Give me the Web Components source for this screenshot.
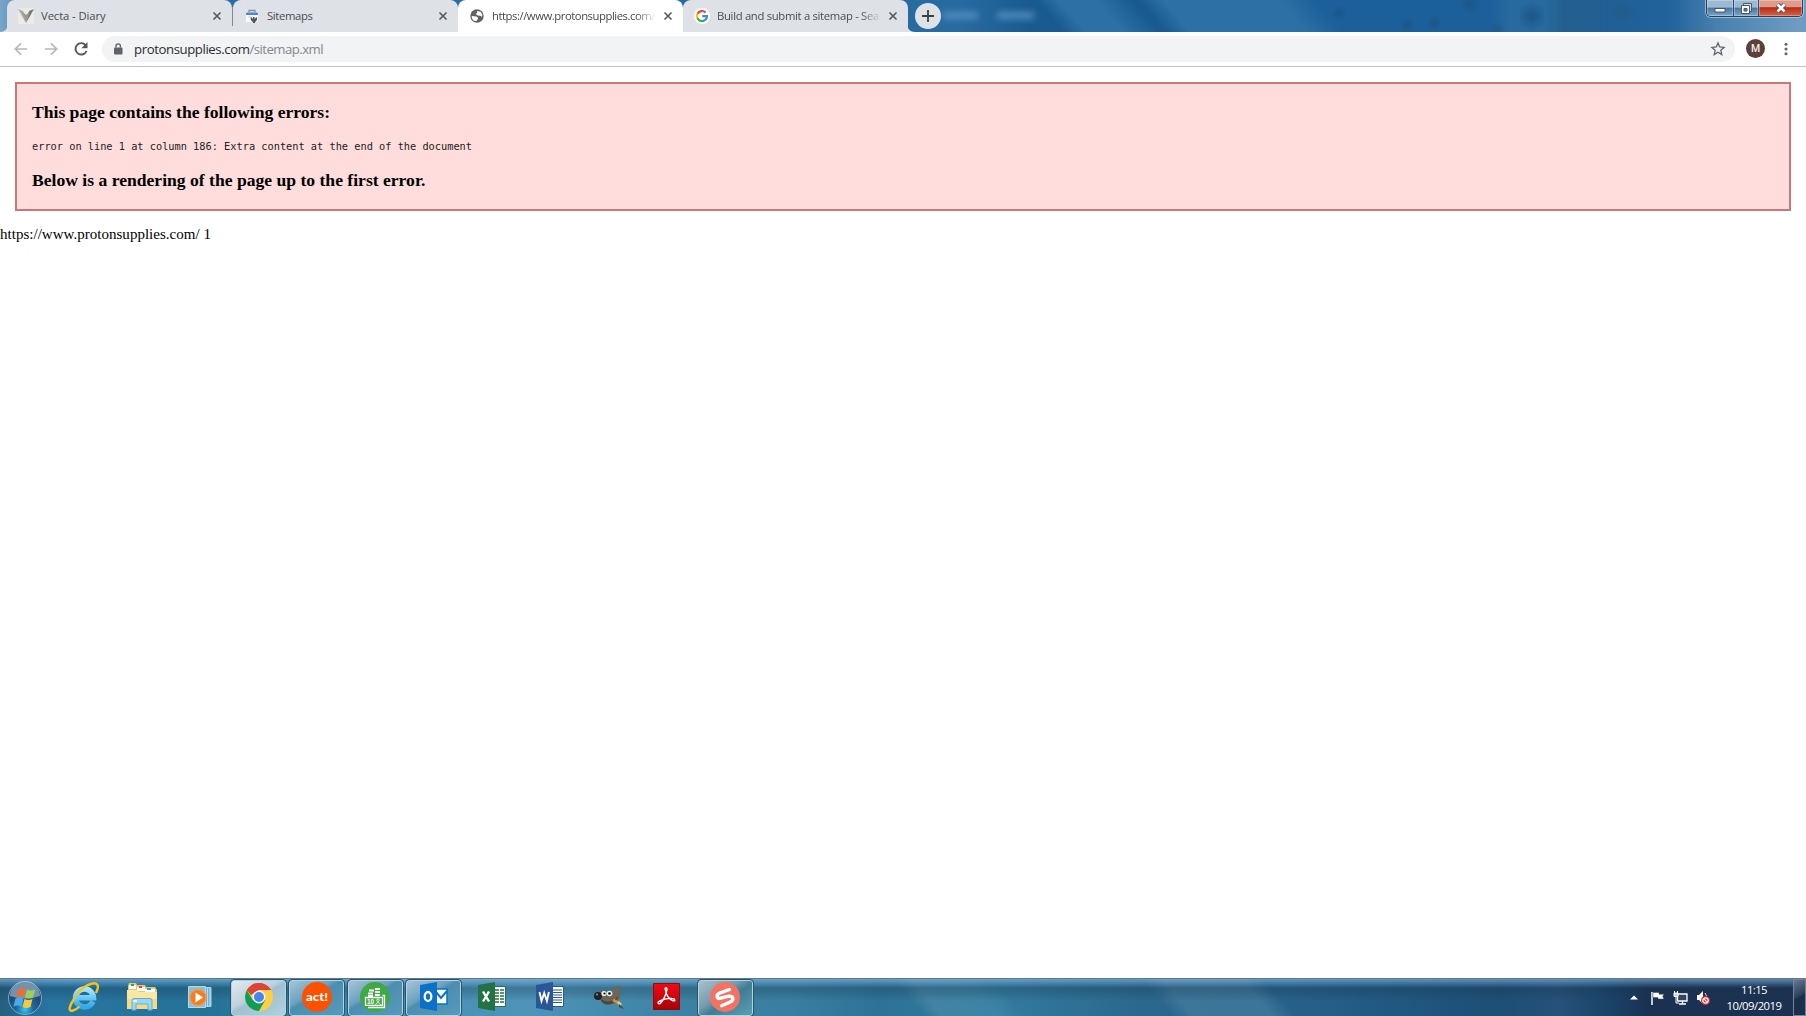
<!DOCTYPE html>
<html lang="en">
<head>
<meta charset="utf-8">
<title>protonsupplies.com/sitemap.xml</title>
<style>
    html, body {
        height: 100%;
        margin: 0;
        overflow: hidden;
        background: #fff;
    }
</style>
</head>
<body>
<desk-top></desk-top>
<script>
const define = (name, html, setup) => {
    const template = document.createElement('template');
    template.innerHTML = html;

    window.customElements.define(name, class extends HTMLElement {
        connectedCallback() {
            if (this.shadowRoot) return;
            this.attachShadow({ mode: 'open' });
            this.shadowRoot.appendChild(template.content.cloneNode(true));
            if (setup) setup(this, this.shadowRoot);
        }
    });
};

// text spaced out (or in) so that it fills the given width
define('fit-text', `
    <style>
        :host { display: block; }
        span { display: inline-block; white-space: pre; }
    </style>
    <span><slot></slot></span>
`, (host, root) => {
    const span = root.querySelector('span');
    const width = Number(host.getAttribute('width'));
    const extra = width - span.getBoundingClientRect().width;
    span.style.letterSpacing = (extra / host.textContent.length) + 'px';
});

const icons = {
    vecta: `<svg width="16" height="16" viewBox="0 0 16 16"><path fill="#ecebe6" d="M0 0h16v16H0z"/><path fill="#aaa" d="M0 1l5 2 3 12z"/><path fill="#777" d="M16 1l-5 2-3 12z"/><path fill="#999" d="M4 3l4 4 4-4-4 12z"/></svg>`,
    sitemaps: `<svg width="16" height="16" viewBox="0 0 16 16"><path fill="#f7f8f9" d="M2 5h12v9H2z"/><path d="M5 4V2.500h6V4" fill="none" stroke="#8c9196" stroke-width="1.300"/><path fill="#a8acb0" d="M3 4h10v1H3z"/><path fill="#4285f4" d="M2 5h12v2H2z"/><path fill="#d0d3d6" d="M4 8.500h5v1H4z"/><path fill="#53575b" d="M7 9l2 2V9h1.500v2l2-2c1.500 2 0 4-1.500 5v1H9v-1C7 13 6 11 7 9z"/></svg>`,
    globe: `<svg width="16" height="16" viewBox="0 0 16 16"><circle cx="8" cy="8" r="6.700" fill="#5f6368"/><path fill="#fff" d="M3 8l4 .5c1.500.3 2 1 2 2.200L7.500 13C5 13.500 2.700 11 2.700 8.500zM8 3l3.500.7 1.800 2.800-.3 2.500-1.500-1.200-2.700-.3-2-1.500 1.500-1.500z"/></svg>`,
    google: `<svg width="16" height="16" viewBox="0 0 16 16"><circle cx="8" cy="8" r="8" fill="#fff"/><g fill="none" stroke-width="2.200"><path stroke="#ea4335" d="M3.500 5.700A5 5 0 0 1 11.600 4.600"/><path stroke="#fbbc05" d="M3.500 5.700a5 5 0 0 0 0 4.600"/><path stroke="#34a853" d="M3.500 10.300a5 5 0 0 0 7.900 1.400"/><path stroke="#4285f4" d="M11.300 11.800A5 5 0 0 0 13 8.200H8.200"/></g></svg>`,

    ie: `<svg width="32" height="32" viewBox="0 0 32 32"><defs><linearGradient id="b" x2="0" y2="1"><stop offset="0" stop-color="#a4e5ff"/><stop offset="1" stop-color="#2faae8"/></linearGradient></defs><path fill="none" stroke="url(#b)" stroke-width="5.500" d="M25 20.500c-2 4-5 5.500-8.500 5.500a9 9 0 1 1 9-9.300H10"/><path fill="none" stroke="#f6c416" stroke-width="2.400" d="M7.500 16C1 25-.500 31 5 29.500c2-.5 4.500-2 6.500-4M8 14C15 5 26.500-.500 29.500 4c1 2 0 5-1.500 8"/></svg>`,
    explorer: `<svg width="32" height="30" viewBox="0 0 32 30"><path fill="#e9c868" d="M2 4l1-3h7l1 2h8l1 2h9l2 3v19H2z"/><path fill="#fff" d="M3 3h7v4H3zM11 5h8v4h-8zM19 7h10v4H19z"/><path fill="#29ad50" d="M5 2h3v2H5z"/><path fill="#e24a31" d="M13 4h3v2h-3z"/><path fill="#3d8fd8" d="M21 6h4v2h-4z"/><path fill="#fae7a3" d="M1 8h10l2 2h18v17H1z"/><path fill="#f6d985" d="M1 17h30v10H1z"/><path fill="#9bd7f1" stroke="#62afd5" d="M6 18.500q0-2 2-2h16q2 0 2 2V28h-4v-6H10v6H6z"/><path fill="#e0f6ff" d="M7 18h4v2H7z"/></svg>`,
    media: `<svg width="28" height="26" viewBox="0 0 28 26"><path fill="#67a8ca" stroke="#a8d4e6" d="M6 3.500h19v19H6z"/><path stroke="#b9dcec" stroke-width="1.300" d="M21.500 3v20M24 4v18"/><path fill="#8fbfd7" stroke="#b4d9e7" d="M2.500 2.500h17v21h-17z"/><circle cx="12" cy="13.500" r="8.500" fill="#f57c1f"/><circle cx="12" cy="13.500" r="8" fill="none" stroke="#fda35a"/><path fill="#fff" d="M9.500 8.500v10l7.500-5z"/></svg>`,
    chrome: `<svg width="30" height="30" viewBox="0 0 30 30"><circle cx="15" cy="15" r="14" fill="#ffcd41"/><path fill="#db4437" d="M2.900 8A14 14 0 0 1 27.100 8H15z"/><path fill="#0f9d58" d="M2.900 8A14 14 0 0 0 15 29l6-10.500-6-2-6 2z"/><path fill="#db4437" d="M15 8h12.100A14 14 0 0 0 2.900 8l4 5z"/><circle cx="15" cy="15" r="6.500" fill="#f1f1f1"/><circle cx="15" cy="15" r="5" fill="#4285f4"/></svg>`,
    act: `<svg width="30" height="30" viewBox="0 0 30 30"><circle cx="15" cy="15" r="15" fill="#fc5200"/><text x="15" y="19" text-anchor="middle" textLength="22" lengthAdjust="spacingAndGlyphs" fill="#fff" font-family="Lato, sans-serif" font-weight="900" font-size="12">act!</text></svg>`,
    money: `<svg width="30" height="30" viewBox="0 0 30 30"><circle cx="15" cy="15" r="15" fill="#3dab42"/><path stroke="#fff" stroke-width="2" d="M9 8.500h5M8 11.500h5M8 14h5M15 7h5M15 10h5M15 13h5"/><path fill="none" stroke="#fff" stroke-width="1.300" d="M5.500 15.500h17v7.800h-17zM22.500 13.500h2v12H8"/><text x="7" y="22" fill="#fff" font-family="Liberation Sans, sans-serif" font-size="6.500" font-weight="700">10</text><circle cx="18" cy="18.200" r="1.300" fill="none" stroke="#fff" stroke-width=".8"/><path fill="none" stroke="#fff" stroke-width=".8" d="M15.500 22.500q2.500-4 5 0"/></svg>`,
    outlook: `<svg width="28" height="29" viewBox="0 0 28 29"><path fill="#fff" stroke="#0873c9" stroke-width="1.500" d="M15 7h12v15H15z"/><path fill="none" stroke="#0873c9" stroke-width="2" d="M16 10l5 6 6-7"/><path fill="#0b70c8" d="M0 3L17 0v29L0 26z"/><ellipse cx="8" cy="14.500" rx="3.300" ry="4.500" fill="none" stroke="#fff" stroke-width="2.300"/></svg>`,
    excel: `<svg width="28" height="29" viewBox="0 0 28 29"><path fill="#fff" stroke="#217346" stroke-width="1" d="M15 4.500h12.500v20H15z"/><path stroke="#217346" stroke-width="1.600" stroke-dasharray="4 1" d="M17 8h9M17 11h9M17 14h9M17 17h9M17 20h9"/><path fill="#217346" d="M0 3L17 0v29L0 26z"/><path stroke="#fff" stroke-width="2.400" d="M5 9.500l6 10M11 9.500l-6 10"/></svg>`,
    word: `<svg width="28" height="29" viewBox="0 0 28 29"><path fill="#fff" stroke="#2b5797" stroke-width="1" d="M15 4.500h12.500v20H15z"/><path stroke="#2b5797" stroke-width="1.200" d="M17 8h9M17 10.500h9M17 13h9M17 15.500h9M17 18h9M17 20.500h9"/><path fill="#2a5699" d="M0 3L17 0v29L0 26z"/><path fill="none" stroke="#fff" stroke-width="1.900" d="M3.500 10l2 9 2.700-8 2.700 8 2-9"/></svg>`,
    gimp: `<svg width="32" height="26" viewBox="0 0 32 26"><path fill="#6d6556" d="M9 6c3 2 5 1 7 1 4-1 7-4 10-6 2 7 2 12-1 16-4 5-12 4-17-1-4 0-7-2-6-5 1-3 4-3 7-5z"/><path fill="#4a463d" d="M8 15c5 4 13 3 17-3-1 8-12 12-17 5z"/><circle cx="5" cy="12" r="4" fill="#202226"/><circle cx="4" cy="10.500" r="1" fill="#99a"/><circle cx="11" cy="9.500" r="2.600" fill="#eee"/><circle cx="16.500" cy="9.500" r="2.800" fill="#eee"/><circle cx="11.500" cy="9.500" r="1.100"/><circle cx="16.500" cy="9.500" r="1.300"/><path stroke="#e28b2d" stroke-width="3" d="M20 16l6 3"/><path stroke="#d7c8a5" stroke-width="2.500" d="M25 18l3 3"/><path fill="#5c3818" d="M26 20l5 5-5-2z"/></svg>`,
    acrobat: `<svg width="27" height="27" viewBox="0 0 27 27"><defs><linearGradient id="r" x2="0" y2="1"><stop offset="0" stop-color="#f30b12"/><stop offset="1" stop-color="#a90008"/></linearGradient></defs><path fill="url(#r)" stroke="#8c0b0d" d="M.5.5h26v26H.5z"/><path fill="none" stroke="#fff" stroke-width="1.400" d="M12.500 7c-1.500-3 2.500-3 1.200.5-1 5-3 9-6 12.500-2.500 2-4-.7-1-2 4-2 8-3 12-2.500 4 .2 4 3 1.300 2.300-4-1.300-7-6-7.500-10.800z"/></svg>`,
    snag: `<svg width="30" height="30" viewBox="0 0 30 30"><circle cx="15" cy="15" r="15" fill="#f37362"/><path fill="none" stroke="#fff" stroke-width="3.400" stroke-linecap="round" stroke-linejoin="round" d="M19.500 7.500l-10 3.700c-4 1.800-2.500 6 1.200 5l8-2c4.500-.7 5.500 3.800 2 5.500l-9 4"/></svg>`
};

define('browser-tab', `
    <style>
        :host {
            box-sizing: border-box;
            display: flex;
            align-items: center;
            width: 225px;
            height: 32px;
            padding: 0 9px 0 11px;
            border-radius: 8px 8px 0 0;
            background: #dee1e6;
            color: #4a4d51;
            font: 11.300px "Open Sans", "Noto Sans", sans-serif;
        }
        :host([active]) { background: #fff; color: #45484c; }
        .icon { width: 16px; height: 16px; margin-right: 7px; }
        .title { flex: 1; overflow: hidden; padding-bottom: 2px; }
        .title.long { -webkit-mask-image: linear-gradient(90deg, #000 calc(100% - 18px), transparent calc(100% + 2px)); }
        .close { margin-left: 8px; }
    </style>
    <div class="icon"></div>
    <div class="title"><slot></slot></div>
    <svg class="close" width="12" height="12" viewBox="0 0 12 12"><path d="M2.500 2.500l7 7M9.500 2.500l-7 7" stroke="#54575b" stroke-width="1.600"/></svg>
`, (host, root) => {
    root.querySelector('.icon').innerHTML = icons[host.getAttribute('icon')];
    if (host.hasAttribute('long')) root.querySelector('.title').classList.add('long');
});

define('window-controls', `
    <style>
        :host {
            display: flex;
            height: 16px;
            border: 1px solid #273f59;
            border-top: 0;
            border-radius: 0 0 5px 5px;
            box-shadow: 0 0 0 1px rgba(220, 235, 250, .55);
            overflow: hidden;
        }
        div {
            display: flex;
            align-items: center;
            justify-content: center;
            width: 26px;
            border-right: 1px solid #294a6c;
            background: linear-gradient(#9bb9d3 0 45%, #47779f 50%, #7aa5c8);
            box-shadow: inset 0 0 0 1px rgba(255, 255, 255, .3);
        }
        .restore { width: 24px; }
        .close { width: 43px; border: 0; background: linear-gradient(#dd9b8c 0 42%, #b92d16 48%, #d46445); }
    </style>
    <div><svg width="12" height="12" viewBox="0 0 12 12"><path fill="#fff" stroke="#4a5764" d="M1 6.500h10v3.500H1z"/></svg></div>
    <div class="restore"><svg width="13" height="13" viewBox="0 0 13 13"><path fill="#ddd" stroke="#4a5764" d="M3.500 1.500h8v8h-8z"/><path fill="#fff" stroke="#4a5764" d="M1.500 3.500h8v8h-8z"/><path fill="#61809d" stroke="#4a5764" d="M4 6.500h3v2.500H4z"/></svg></div>
    <div class="close"><svg width="12" height="12" viewBox="0 0 12 12"><path d="M2.500 2.500l7 7M9.500 2.500l-7 7" stroke="#5b4a4a" stroke-width="4.500"/><path d="M2.500 2.500l7 7M9.500 2.500l-7 7" stroke="#fff" stroke-width="2.600"/></svg></div>
`);

define('tab-strip', `
    <style>
        :host {
            display: flex;
            height: 32px;
            position: relative;
            background:
                radial-gradient(circle at 1339px 13px, #1b527d99 1px, transparent 9px),
                radial-gradient(circle at 1407px 25px, #1b527d99 1px, transparent 9px),
                radial-gradient(circle at 1434px 23px, #1b527d99 1px, transparent 9px),
                radial-gradient(circle at 1470px 4px, #1b527d99 1px, transparent 11px),
                radial-gradient(circle at 1532px 16px, #1a507db0 2px, transparent 14px),
                radial-gradient(circle at 1497px 29px, #1b578599 1px, transparent 8px),
                radial-gradient(circle at 1622px 13px, #235a84b0 2px, transparent 14px),
                linear-gradient(90deg, #78a5ca 0, #437eae 35px, #2a6ca3 90px, #286ba1 960px, rgba(28, 96, 155, 0) 1030px 1490px, #266a9f 1510px 1545px, #235f90 1565px 1590px, #1f609a 1620px, #22639b 1670px, #477fae 1715px, #6f9cc3 1800px),
                linear-gradient(50deg, #195b91 815px, #2c70a5 832px 860px, #195b91 888px 893px, #2c70a5 912px 1000px, #1c609b 1028px);
        }
        .backdrop {
            position: absolute;
            inset: 0 auto auto 907px;
        }
        .tabs { display: flex; padding-left: 7px; z-index: 1; position: relative; }
        .flare { position: absolute; left: 0; bottom: 0; }
        .flare.end { left: 907px; }
        i { width: 1px; height: 19px; margin-top: 7px; background: #85888c; box-shadow: 0 6px 0 #dee1e6; }
        .new { z-index: 1; width: 26px; height: 26px; margin: 3px 0 0 7px; }
        window-controls { z-index: 1; margin: 0 3px 0 auto; }
    </style>
    <svg class="backdrop" width="200" height="32" viewBox="907 0 200 32">
        <defs>
            <filter id="soft" x="-20%" y="-200%" width="140%" height="500%"><feGaussianBlur stdDeviation="3"/></filter>
        </defs>
        <path filter="url(#soft)" fill="#5c94c2" opacity=".8" d="M943 12h35v7h-35zM997 12h37v7h-37z"/>
    </svg>
    <div class="tabs">
        <svg class="flare" width="8" height="8"><path fill="#dee1e6" d="M8 0v8H0q7 0 8-8z"/></svg>
        <browser-tab icon="vecta"><fit-text width="64.500">Vecta - Diary</fit-text></browser-tab>
        <i></i>
        <browser-tab icon="sitemaps"><fit-text width="45.500">Sitemaps</fit-text></browser-tab>
        <browser-tab icon="globe" active long><fit-text width="163">https://www.protonsupplies.com/</fit-text></browser-tab>
        <browser-tab icon="google" long><fit-text width="178">Build and submit a sitemap - Search</fit-text></browser-tab>
        <svg class="flare end" width="8" height="8"><path fill="#dee1e6" d="M0 0v8h8q-7 0-8-8z"/></svg>
    </div>
    <svg class="new" viewBox="0 0 26 26"><circle cx="13" cy="13" r="13" fill="#dee1e6"/><path d="M13 7v12M7 13h12" stroke="#3c4043" stroke-width="1.800"/></svg>
    <window-controls></window-controls>
`);

define('address-bar', `
    <style>
        :host {
            box-sizing: border-box;
            display: flex;
            align-items: center;
            height: 35px;
            padding: 0 15px 1px 13px;
            border-bottom: 1px solid #c2c3c5;
            background: #fff;
        }
        .nav { display: flex; gap: 14px; width: 89px; }
        .pill {
            box-sizing: border-box;
            flex: 1;
            display: flex;
            align-items: center;
            height: 26px;
            padding: 0 9px 0 10px;
            border-radius: 13px;
            background: #f1f3f4;
            color: #2b2d30;
            font: 13.200px "Open Sans", "Noto Sans", sans-serif;
        }
        .lock { margin-right: 10px; }
        .path { color: #85898d; }
        .star { margin-left: auto; }
        .avatar {
            display: flex;
            align-items: center;
            justify-content: center;
            width: 19px;
            height: 19px;
            margin: 0 16px 0 11px;
            border-radius: 50%;
            background: #5d4037;
            color: #eee;
            font: 500 10.500px Roboto, sans-serif;
        }
    </style>
    <div class="nav">
        <svg width="16" height="16" viewBox="0 0 16 16"><path fill="none" stroke="#b5b7b9" stroke-width="1.700" d="M14 8H2.500M8 2.300L2.300 8 8 13.700"/></svg>
        <svg width="16" height="16" viewBox="0 0 16 16"><path fill="none" stroke="#b5b7b9" stroke-width="1.700" d="M2 8h11.500M8 2.300L13.700 8 8 13.700"/></svg>
        <svg width="16" height="16" viewBox="0 0 16 16"><path fill="none" stroke="#54575b" stroke-width="1.900" d="M12.600 4.200A5.700 5.700 0 1 0 13.500 10"/><path fill="#54575b" d="M14.500 1v6.300H8.300z"/></svg>
    </div>
    <div class="pill">
        <svg class="lock" width="12" height="14" viewBox="0 0 12 14"><path fill="#5f6368" d="M3 5.500h6.500q1 0 1 1v5q0 1-1 1H3q-1 0-1-1v-5q0-1 1-1z"/><path fill="none" stroke="#5f6368" stroke-width="1.300" d="M4 5.500V4a2.200 2.200 0 0 1 4.400 0v1.500"/></svg>
        <fit-text width="115.500">protonsupplies.com</fit-text>
        <fit-text class="path" width="73.500">/sitemap.xml</fit-text>
        <svg class="star" width="16" height="16" viewBox="0 0 16 16"><path fill="none" stroke="#5f6368" stroke-width="1.300" d="M8 2l1.700 4 4.400.4-3.300 2.900 1 4.300L8 11.300l-3.800 2.300 1-4.300L1.900 6.400 6.300 6z"/></svg>
    </div>
    <div class="avatar">M</div>
    <svg width="10" height="16" viewBox="0 0 10 16"><g fill="#5f6368"><circle cx="5" cy="3.200" r="1.500"/><circle cx="5" cy="8" r="1.500"/><circle cx="5" cy="12.800" r="1.500"/></g></svg>
`);

define('parser-error', `
    <style>
        :host {
            box-sizing: border-box;
            display: block;
            height: 129px;
            margin: 0 15px;
            padding: 18px 15px 0;
            border: 2px solid #c77;
            background: #fdd;
            color: #000;
        }
        h3 { margin: 0; font: bold 17.600px/21px "Liberation Serif", serif; }
        .message { margin: 14px 0 15px; font: 10.300px/18px "DejaVu Sans Mono", monospace; color: #222; }
    </style>
    <h3><fit-text width="298">This page contains the following errors:</fit-text></h3>
    <div class="message"><slot></slot></div>
    <h3><fit-text width="393.500">Below is a rendering of the page up to the first error.</fit-text></h3>
`);

define('task-item', `
    <style>
        :host {
            box-sizing: border-box;
            display: flex;
            align-items: center;
            justify-content: center;
            width: 55px;
            height: 36px;
            margin-right: 3.350px;
            border: 1px solid transparent;
            border-radius: 3px;
        }
        :host([open]) {
            border-color: #b2d5e5;
            outline: 1px solid #28546c;
            background: linear-gradient(150deg, #a6c4d7 0, #6ba2bf 38%, #4d8eaf 45%, #559abc);
        }
        :host([current]) { background: linear-gradient(150deg, #e1eaf0 0, #bdd2df 42%, #a2c0d0 50%, #b0d0dc); }
        :host([dim]) { background: linear-gradient(145deg, #aabfcb 0, #749cad 40%, #417c94 55%, #59a0b5); }
        svg { display: block; margin-bottom: 2px; }
    </style>
`, (host, root) => {
    root.innerHTML += icons[host.getAttribute('icon')];
});

define('system-tray', `
    <style>
        :host { display: flex; align-items: center; height: 37px; color: #fff; }
        svg { display: block; }
        .arrow { margin-right: 12px; }
        .icons { display: flex; gap: 8px; }
        .clock {
            width: 56px;
            margin: 0 11px 0 15px;
            font: 11.300px/16px "Open Sans", "Noto Sans", sans-serif;
            display: flex;
            flex-direction: column;
            align-items: center;
        }
        .show { box-sizing: border-box; width: 13px; height: 37px; border: 1px solid #71869b; background: linear-gradient(150deg, #65788d, #2c405a 45%, #1b2e4c 50%); }
    </style>
    <svg class="arrow" width="8" height="5"><path fill="#fff" d="M0 4.500L4 .5l4 4z"/></svg>
    <div class="icons">
        <svg width="15" height="16" viewBox="0 0 15 16"><path stroke="#fff" stroke-width="1.500" d="M2 2v13"/><path fill="#fff" stroke="#39445a" stroke-width=".5" d="M3 2.500h6v1.700h5l-1.300 2.300L14 9H8V7.500H3z"/></svg>
        <svg width="15" height="16" viewBox="0 0 15 16"><path fill="#304663" stroke="#fff" stroke-width="1.300" d="M4.500 4h9.500v7H4.500zM6 14h7M9.500 11v3"/><path fill="#ccd3db" stroke="#fff" d="M1 3h4v3.500H1z"/><path stroke="#fff" fill="none" d="M1.500 3V1M4.500 3V1M3 7v6h3"/></svg>
        <svg width="15" height="16" viewBox="0 0 15 16"><path fill="#fff" d="M1 5h2l4-4v13L3 10H1z"/><path stroke="#dce2e7" fill="none" d="M9 3q2 2 1 5"/><circle cx="9.500" cy="10.500" r="4.500" fill="#e32626"/><circle cx="9.500" cy="10.500" r="2.700" fill="none" stroke="#fff" stroke-width="1.200"/><path stroke="#fff" stroke-width="1.200" d="M7.600 8.600l3.800 3.800"/></svg>
    </div>
    <div class="clock"><fit-text width="26">11:15</fit-text><fit-text width="55">10/09/2019</fit-text></div>
    <div class="show"></div>
`);

define('task-bar', `
    <style>
        :host {
            box-sizing: border-box;
            display: flex;
            align-items: center;
            height: 38px;
            border-top: 1px solid #647787;
            background:
                linear-gradient(rgba(135, 178, 216, .65) 0, rgba(100, 155, 200, .45) 4px, rgba(25, 55, 75, .3) 9px, rgba(25, 55, 75, .22) 14px, transparent 22px),
                linear-gradient(50deg, transparent 708px, rgba(115, 165, 190, .28) 722px, rgba(100, 170, 190, .2) 765px, transparent 785px 898px, rgba(115, 160, 190, .28) 914px 975px, transparent 992px),
                linear-gradient(90deg, #25607e 0, #2875a1 50px, #257297 210px, #488fb3 400px, #4e94b8 530px, #3b80a0 700px, #3a7fa1 790px, #2e7297 880px, #337a9f 1000px, #2b688d 1140px, #27618a 1290px, #1d4e76 1500px, #26517a 1560px, #1a4268 1610px, #1a3151 1650px, #1c3151);
        }
        .start { margin: 0 13px 0 7px; }
        system-tray { margin-left: auto; }
    </style>
    <svg class="start" width="36" height="36" viewBox="0 0 36 36">
        <defs><radialGradient id="g" cy=".85"><stop offset="0" stop-color="#32c8f3"/><stop offset=".5" stop-color="#1c6ba4"/><stop offset="1" stop-color="#224d72"/></radialGradient></defs>
        <circle cx="18" cy="18" r="16.500" fill="url(#g)" stroke="#77aac8"/>
        <path fill="#d6e7f1" opacity=".45" d="M3 16a15 15 0 0 1 30 0q-15 5-30 0z"/>
        <path fill="#f06c36" d="M11 10q4-3 8-1l-2 8q-4-2-8 0z"/>
        <path fill="#9bd15a" d="M20 9.500q4 2 8.500 0l-2.500 8q-4 2-8 0z"/>
        <path fill="#49a9ec" d="M8.500 18.500q4-2 8 0l-2 8q-4-2-8 0z"/>
        <path fill="#fbc93d" d="M17.500 19q4 2 8 0l-2 8q-4 2-8 0z"/>
    </svg>
    <task-item icon="ie"></task-item>
    <task-item icon="explorer"></task-item>
    <task-item icon="media"></task-item>
    <task-item icon="chrome" open current></task-item>
    <task-item icon="act" open></task-item>
    <task-item icon="money" open></task-item>
    <task-item icon="outlook" open></task-item>
    <task-item icon="excel"></task-item>
    <task-item icon="word"></task-item>
    <task-item icon="gimp"></task-item>
    <task-item icon="acrobat"></task-item>
    <task-item icon="snag" open dim></task-item>
    <system-tray></system-tray>
`);

define('desk-top', `
    <style>
        :host { display: flex; flex-direction: column; height: 100vh; }
        main { flex: 1; padding-top: 15px; background: #fff; }
        .rest { margin-top: 15px; font: 15px/17px "Liberation Serif", serif; color: #000; }
    </style>
    <tab-strip></tab-strip>
    <address-bar></address-bar>
    <main>
        <parser-error><fit-text width="440">error on line 1 at column 186: Extra content at the end of the document</fit-text></parser-error>
        <div class="rest"><fit-text width="211">https://www.protonsupplies.com/ 1</fit-text></div>
    </main>
    <task-bar></task-bar>
`);
</script>
</body>
</html>
